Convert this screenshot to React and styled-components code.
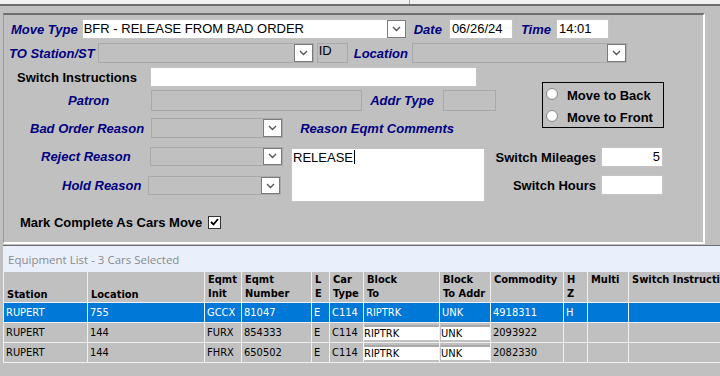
import React from 'react';
import styled, { createGlobalStyle } from 'styled-components';

const GlobalStyle = createGlobalStyle`
  html, body {
    margin: 0;
    padding: 0;
  }
  body {
    background: #c0c0c0;
    font-family: "Liberation Sans", Arial, sans-serif;
    overflow: hidden;
  }
`;

const Screen = styled.div`
  width: 720px;
  height: 376px;
  overflow: hidden;
  background: #c0c0c0;
`;

const TabStrip = styled.div`
  display: flex;
  height: 4px;
  background: #f0f0f0;
  border-bottom: 2px solid #6e6e6e;
`;

const TabStub = styled.div`
  width: 409px;
  border-right: 1px solid #a8a8a8;
`;

const Panel = styled.section`
  box-sizing: border-box;
  width: 702px;
  height: 231px;
  margin: 7px 0 0 3px;
  border-top: 2px solid #6e6e6e;
  border-left: 1px solid #9c9c9c;
  border-right: 2px solid #fff;
  border-bottom: 2px solid #fff;
`;

const Row = styled.div`
  display: flex;
  align-items: ${({ $align }) => $align || 'center'};
  height: ${({ $h }) => $h || 20}px;
  margin-top: ${({ $top }) => $top || 0}px;
`;

const Caption = styled.label`
  flex: none;
  margin-left: ${({ $left }) => $left || 0}px;
  font: italic bold 13px "Liberation Sans", Arial, sans-serif;
  color: #000080;
  white-space: nowrap;
`;

const Plain = styled(Caption)`
  font-style: normal;
  color: #000;
  width: ${({ $w }) => ($w ? `${$w}px` : 'auto')};
  text-align: ${({ $w }) => ($w ? 'right' : 'left')};
`;

const Field = styled.div`
  flex: none;
  box-sizing: border-box;
  margin-left: ${({ $left }) => $left || 0}px;
  width: ${({ $w }) => $w}px;
  height: ${({ $h }) => $h || 20}px;
  padding: 0 2px;
  background: ${({ $off }) => ($off ? '#c0c0c0' : '#fff')};
  border: 1px solid ${({ $off }) => ($off ? '#a9a9a9' : '#c4c4c4')};
  font-size: 13px;
  line-height: 18px;
  text-align: ${({ $right }) => ($right ? 'right' : 'left')};
  white-space: nowrap;
  overflow: hidden;
`;

const IdBox = styled(Field)`
  line-height: 14px;
  padding: 0 1px;
`;

const ComboBox = styled.div`
  flex: none;
  box-sizing: border-box;
  display: flex;
  justify-content: space-between;
  margin-left: ${({ $left }) => $left || 0}px;
  width: ${({ $w }) => $w}px;
  height: ${({ $h }) => $h || 20}px;
  background: ${({ $off }) => ($off ? '#c0c0c0' : '#fff')};
  border: 1px solid ${({ $off }) => ($off ? '#a9a9a9' : '#c4c4c4')};
`;

const ComboText = styled.span`
  padding-left: 1px;
  font-size: 13px;
  line-height: 18px;
  white-space: nowrap;
`;

const DropButton = styled.span`
  box-sizing: border-box;
  display: flex;
  align-items: center;
  justify-content: center;
  width: 19px;
  height: 100%;
  background: #fff;
  border: 1px solid #7a7a7a;
`;

const Lower = styled.div`
  display: flex;
  margin-top: 4px;
`;

const LeftCol = styled.div`
  flex: none;
  width: 486px;
`;

const RightCol = styled.div`
  flex: 1;
`;

const ReasonBlock = styled.div`
  display: flex;
  margin-top: 8px;
`;

const ReasonSelects = styled.div`
  flex: none;
  width: 287px;
`;

const Comments = styled.div`
  box-sizing: border-box;
  width: 194px;
  height: 54px;
  margin-top: 2px;
  padding: 1px 1px;
  background: #fff;
  border: 1px solid #c4c4c4;
  font-size: 13px;
  line-height: 15px;
`;

const Caret = styled.span`
  display: inline-block;
  width: 1px;
  height: 14px;
  margin-left: 1px;
  vertical-align: -2px;
  background: #000;
`;

const CheckBox = styled.span`
  box-sizing: border-box;
  flex: none;
  display: flex;
  align-items: center;
  justify-content: center;
  width: 13px;
  height: 13px;
  margin-left: ${({ $left }) => $left || 0}px;
  background: #fff;
  border: 1px solid #333;
`;

const RadioGroup = styled.div`
  box-sizing: border-box;
  width: 122px;
  height: 46px;
  margin: 15px 0 0 52px;
  padding-top: 1px;
  border: 1px solid #000;
`;

const RadioRow = styled.div`
  display: flex;
  align-items: center;
  height: 22px;
  padding-left: 3px;
`;

const RadioDot = styled.span`
  box-sizing: border-box;
  width: 12px;
  height: 12px;
  margin-right: 9px;
  margin-top: -2px;
  border-radius: 50%;
  border: 1px solid #8d8d8d;
  background: radial-gradient(circle at 45% 40%, #fff 45%, #e2e2e2 100%);
`;

const SideRow = styled(Row)`
  margin-top: ${({ $top }) => $top}px;
`;

const ListArea = styled.div`
  margin: 1px 0 0 3px;
`;

const ListTitle = styled.div`
  height: 26px;
  padding-left: 5px;
  background: #e9f0fc;
  border-top: 1px solid #6e6e6e;
  font: 11.5px "Open Sans", "Noto Sans", sans-serif;
  line-height: 27px;
  color: #8a8a8a;
`;

const COLUMNS = '84px 117px 37px 70px 18px 34px 76px 51px 73px 24px 41px 140px';

const GridRow = styled.div`
  display: grid;
  grid-template-columns: ${COLUMNS};
  height: ${({ $h }) => $h}px;
  background: ${({ $selected }) => ($selected ? '#0078d7' : '#c0c0c0')};
  color: ${({ $selected }) => ($selected ? '#fff' : '#000')};
  font-family: "DejaVu Sans Condensed", "DejaVu Sans", sans-serif;
  font-size: 11px;
`;

const HeadCell = styled.div`
  box-sizing: border-box;
  display: flex;
  flex-direction: column;
  justify-content: ${({ $bottom }) => ($bottom ? 'flex-end' : 'flex-start')};
  padding: 1px 2px 0 3px;
  border-left: 1px solid #f0f0f0;
  border-bottom: 1px solid #f0f0f0;
  font-weight: bold;
  line-height: 14px;
  white-space: nowrap;
  overflow: hidden;
`;

const Cell = styled.div`
  box-sizing: border-box;
  padding-left: 2px;
  border-left: 1px solid #f0f0f0;
  border-bottom: 1px solid #f0f0f0;
  line-height: 19px;
  white-space: nowrap;
  overflow: hidden;
`;

const EditCell = styled(Cell)`
  padding: 1px 0 0 ${({ $inset }) => $inset || 0}px;
`;

const CellInput = styled.div`
  height: 13px;
  margin-top: 1px;
  border-top: 2px solid #a9a9a9;
  background: #fff;
  line-height: 13px;
`;

const Chevron = () => (
  <svg width="9" height="6" viewBox="0 0 9 6">
    <polyline points="1,1 4.5,4.5 8,1" fill="none" stroke="#555" strokeWidth="1.4" />
  </svg>
);

const Combo = ({ w, left, h, off, text }) => (
  <ComboBox $w={w} $left={left} $h={h} $off={off}>
    <ComboText>{text}</ComboText>
    <DropButton>
      <Chevron />
    </DropButton>
  </ComboBox>
);

const headers = [
  { lines: ['Station'], bottom: true },
  { lines: ['Location'], bottom: true },
  { lines: ['Eqmt', 'Init'] },
  { lines: ['Eqmt', 'Number'] },
  { lines: ['L', 'E'] },
  { lines: ['Car', 'Type'] },
  { lines: ['Block', 'To'] },
  { lines: ['Block', 'To Addr'] },
  { lines: ['Commodity'] },
  { lines: ['H', 'Z'] },
  { lines: ['Multi'] },
  { lines: ['Switch Instructions'] },
];

const cars = [
  { station: 'RUPERT', location: '755', init: 'GCCX', number: '81047', le: 'E', type: 'C114', block: 'RIPTRK', addr: 'UNK', commodity: '4918311', hz: 'H', selected: true },
  { station: 'RUPERT', location: '144', init: 'FURX', number: '854333', le: 'E', type: 'C114', block: 'RIPTRK', addr: 'UNK', commodity: '2093922', hz: '' },
  { station: 'RUPERT', location: '144', init: 'FHRX', number: '650502', le: 'E', type: 'C114', block: 'RIPTRK', addr: 'UNK', commodity: '2082330', hz: '' },
];

const CarRow = ({ car }) => (
  <GridRow $h={20} $selected={car.selected}>
    <Cell>{car.station}</Cell>
    <Cell>{car.location}</Cell>
    <Cell>{car.init}</Cell>
    <Cell>{car.number}</Cell>
    <Cell>{car.le}</Cell>
    <Cell>{car.type}</Cell>
    {car.selected ? (
      <>
        <Cell>{car.block}</Cell>
        <Cell>{car.addr}</Cell>
      </>
    ) : (
      <>
        <EditCell>
          <CellInput>{car.block}</CellInput>
        </EditCell>
        <EditCell $inset={1}>
          <CellInput>{car.addr}</CellInput>
        </EditCell>
      </>
    )}
    <Cell>{car.commodity}</Cell>
    <Cell>{car.hz}</Cell>
    <Cell />
    <Cell />
  </GridRow>
);

export default function App() {
  return (
    <Screen>
      <GlobalStyle />
      <TabStrip>
        <TabStub />
      </TabStrip>

      <Panel>
        <Row $top={4}>
          <Caption $left={7}>Move Type</Caption>
          <Combo w={325} left={4} text="BFR - RELEASE FROM BAD ORDER" />
          <Caption $left={7}>Date</Caption>
          <Field $w={64} $left={7}>06/26/24</Field>
          <Caption $left={8}>Time</Caption>
          <Field $w={53} $left={5}>14:01</Field>
        </Row>

        <Row $top={4}>
          <Caption $left={5}>TO Station/ST</Caption>
          <Combo w={216} left={3} off />
          <IdBox $w={31} $left={3} $off>ID</IdBox>
          <Caption $left={6}>Location</Caption>
          <Combo w={215} left={4} off />
        </Row>

        <Lower>
          <LeftCol>
            <Row>
              <Plain $left={13}>Switch Instructions</Plain>
              <Field $w={327} $left={13} />
            </Row>

            <Row $top={3} $h={21}>
              <Caption $left={64}>Patron</Caption>
              <Field $w={211} $left={42} $h={21} $off />
              <Caption $left={8}>Addr Type</Caption>
              <Field $w={53} $left={9} $h={21} $off />
            </Row>

            <Row $top={7}>
              <Caption $left={26}>Bad Order Reason</Caption>
              <Combo w={132} left={7} off />
              <Caption $left={17}>Reason Eqmt Comments</Caption>
            </Row>

            <ReasonBlock>
              <ReasonSelects>
                <Row>
                  <Caption $left={37}>Reject Reason</Caption>
                  <Combo w={133} left={19} h={19} off />
                </Row>
                <Row $top={10} $h={19}>
                  <Caption $left={58}>Hold Reason</Caption>
                  <Combo w={133} left={7} h={19} off />
                </Row>
              </ReasonSelects>
              <Comments>
                RELEASE
                <Caret />
              </Comments>
            </ReasonBlock>

            <Row $top={13} $h={14}>
              <Plain $left={16}>Mark Complete As Cars Move</Plain>
              <CheckBox $left={6}>
                <svg width="9" height="8" viewBox="0 0 9 8">
                  <polyline points="1,4 3.5,6.5 8,1" fill="none" stroke="#000" strokeWidth="1.8" />
                </svg>
              </CheckBox>
            </Row>
          </LeftCol>

          <RightCol>
            <RadioGroup>
              <RadioRow>
                <RadioDot />
                <Plain>Move to Back</Plain>
              </RadioRow>
              <RadioRow>
                <RadioDot />
                <Plain>Move to Front</Plain>
              </RadioRow>
            </RadioGroup>
            <SideRow $top={19}>
              <Plain $w={106}>Switch Mileages</Plain>
              <Field $w={62} $left={5} $right>5</Field>
            </SideRow>
            <SideRow $top={8}>
              <Plain $w={106}>Switch Hours</Plain>
              <Field $w={62} $left={5} />
            </SideRow>
          </RightCol>
        </Lower>
      </Panel>

      <ListArea>
        <ListTitle>Equipment List - 3 Cars Selected</ListTitle>
        <GridRow $h={31}>
          {headers.map((h, i) => (
            <HeadCell key={i} $bottom={h.bottom}>
              {h.lines.map((l) => (
                <span key={l}>{l}</span>
              ))}
            </HeadCell>
          ))}
        </GridRow>
        {cars.map((car) => (
          <CarRow key={car.number} car={car} />
        ))}
      </ListArea>
    </Screen>
  );
}
